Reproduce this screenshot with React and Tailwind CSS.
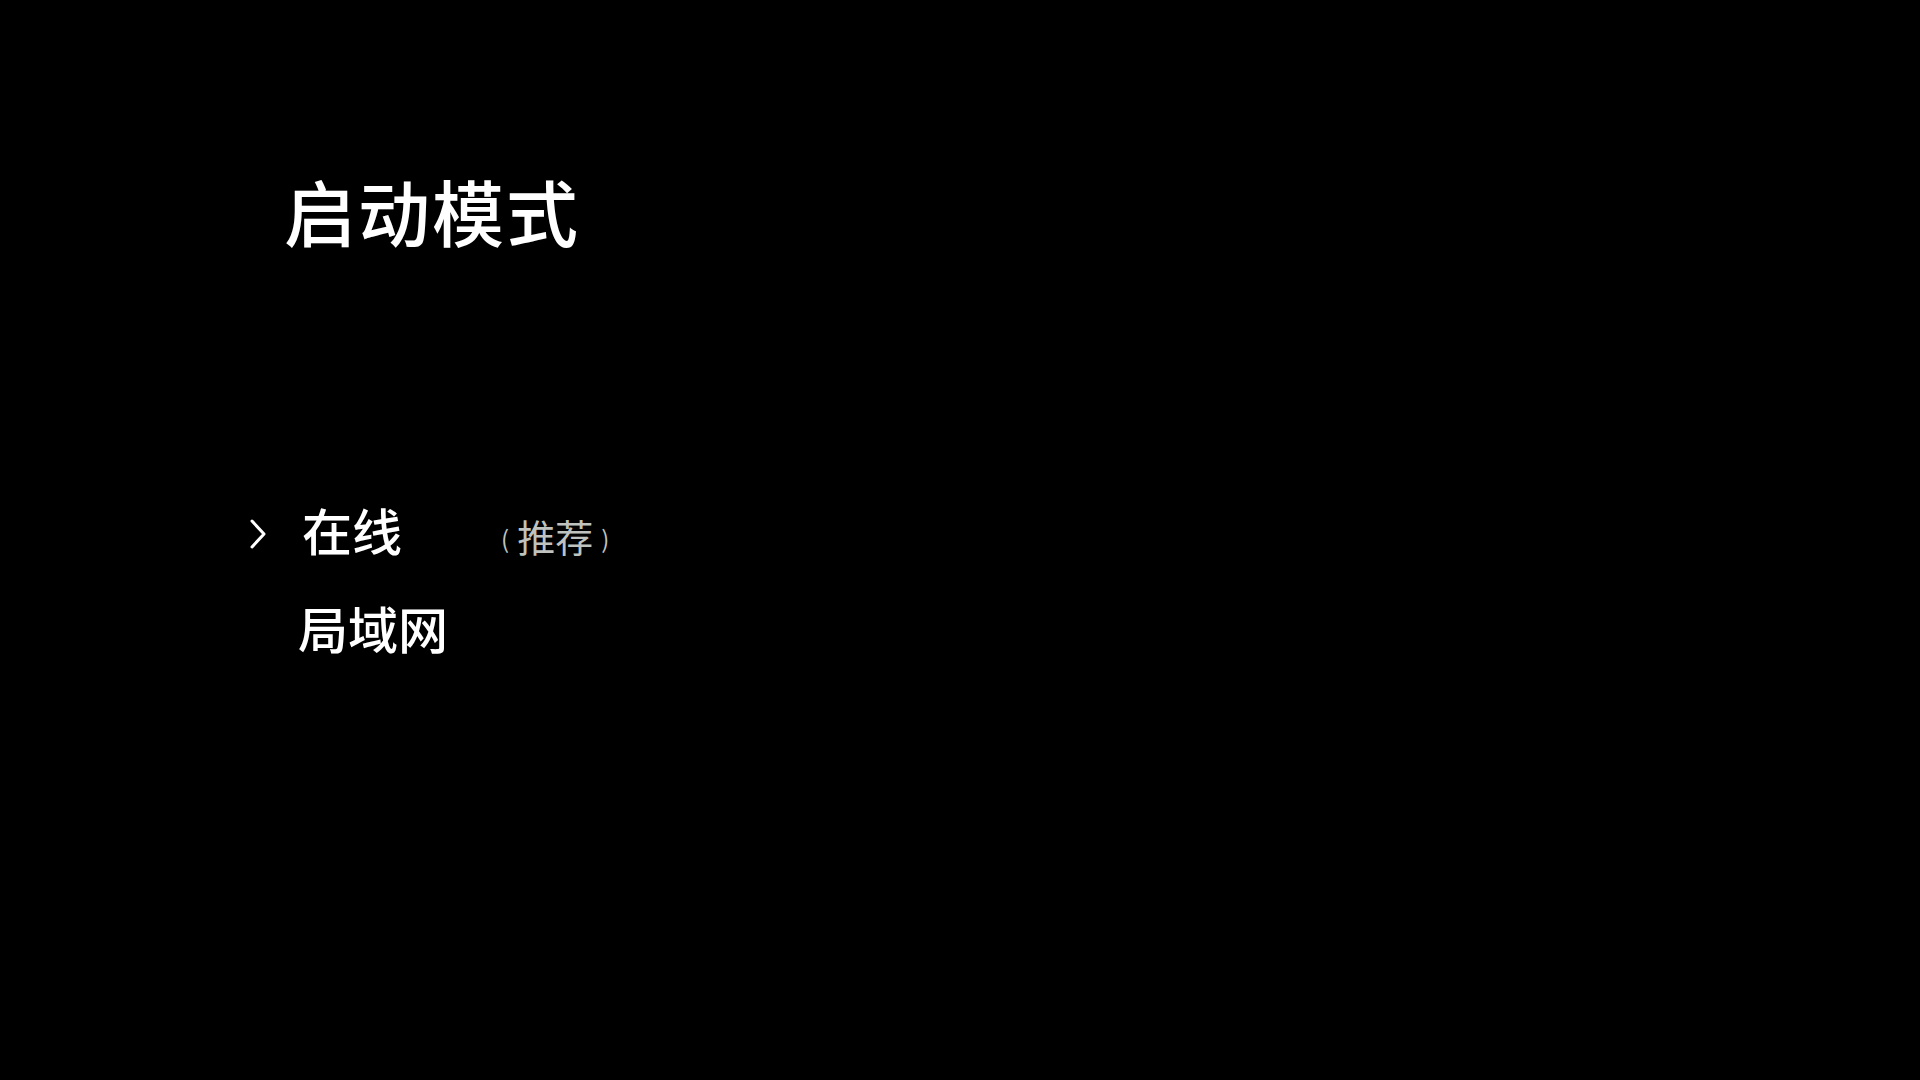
export default function App() {
  return (
    <div
      className="w-[1920px] h-[1080px] bg-black text-white overflow-hidden"
      style={{ fontFamily: '"Noto Sans CJK SC", "Noto Sans", sans-serif' }}
    >
      <div className="pt-[174px] pl-[284px]">
        <h1 className="text-[72px] leading-none font-medium tracking-[2px]">启动模式</h1>
      </div>
      <div className="mt-[257px] flex flex-col gap-[47px]">
        <div className="flex items-center">
          <div className="w-[302px] flex justify-end pr-[34px] pt-[10px]">
            <svg width="20" height="32" viewBox="0 0 20 32" fill="none">
              <polyline points="4,3 16,16 4,29" stroke="white" strokeWidth="3" strokeLinecap="round" strokeLinejoin="round" />
            </svg>
          </div>
          <span className="text-[50px] leading-none font-medium">在线</span>
          <div className="ml-[99px] mt-[14px] flex items-center text-[#bfc2bf]">
            <span className="text-[24px] leading-none mt-[4px]">(</span>
            <span className="ml-[8px] text-[38px] leading-none">推荐</span>
            <span className="ml-[8px] text-[24px] leading-none mt-[4px]">)</span>
          </div>
        </div>
        <div className="flex items-center pl-[298px]">
          <span className="text-[50px] leading-none font-medium">局域网</span>
        </div>
      </div>
    </div>
  );
}
